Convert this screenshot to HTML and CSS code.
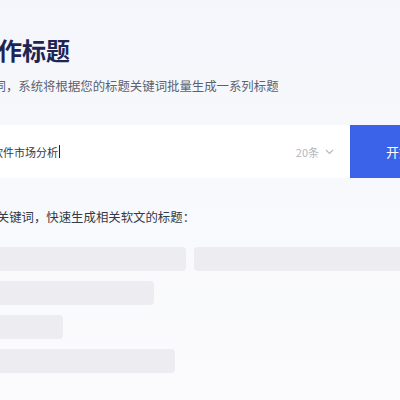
FILE: index.html
```html
<!DOCTYPE html>
<html lang="zh">
<head>
<meta charset="utf-8">
<link rel="stylesheet" href="styles.css">
</head>
<body>
<div class="page">
  <h1 class="title">创作标题</h1>
  <p class="subtitle">输入关键词，系统将根据您的标题关键词批量生成一系列标题</p>
  <div class="search">
    <div class="input">
      <span class="value">软件市场分析</span><span class="caret"></span>
      <span class="count">20条
        <svg class="chev" width="9" height="6" viewBox="0 0 9 6"><polyline points="1,1 4.5,4.5 8,1" fill="none" stroke="#b3b7c0" stroke-width="1.1"/></svg>
      </span>
    </div>
    <button class="btn">开始生成</button>
  </div>
  <p class="hint">输入关键词，快速生成相关软文的标题：</p>
  <div class="skeleton">
    <div class="row"><div class="bar" style="width:246px"></div><div class="bar" style="width:260px"></div></div>
    <div class="row"><div class="bar" style="width:214px"></div></div>
    <div class="row"><div class="bar" style="width:123px"></div></div>
    <div class="row"><div class="bar" style="width:235px"></div></div>
  </div>
</div>
</body>
</html>
```
FILE: styles.css
```css
html, body {
  margin: 0;
  padding: 0;
  width: 400px;
  height: 400px;
  overflow: hidden;
}
body {
  background: linear-gradient(180deg, #f4f6fb 0%, #f8f9fc 50%, #fbfbfd 100%);
  font-family: "Noto Sans CJK SC", "Noto Sans", sans-serif;
}
.page {
  margin-left: -60px;
  width: 540px;
  padding-top: 34px;
}
.title {
  margin: 0;
  padding-left: 34px;
  font-size: 24px;
  line-height: 32px;
  font-weight: 700;
  color: #1e2553;
}
.subtitle {
  margin: 10px 0 0;
  padding-left: 4px;
  font-size: 12.4px;
  line-height: 20px;
  color: #5c6270;
}
.search {
  margin-top: 29px;
  display: flex;
  height: 53px;
}
.input {
  width: 410px;
  background: #fff;
  display: flex;
  align-items: center;
  padding-left: 52px;
  box-sizing: border-box;
}
.value {
  font-size: 11px;
  color: #333a48;
}
.caret {
  display: inline-block;
  width: 1px;
  height: 13px;
  background: #222;
  margin-left: 1px;
}
.count {
  margin-left: auto;
  margin-right: 16px;
  font-size: 11px;
  color: #b3b7c0;
  display: flex;
  align-items: center;
  gap: 6px;
}
.btn {
  width: 130px;
  border: 0;
  background: #3a63ea;
  color: #fff;
  font-family: inherit;
  font-size: 13px;
  text-align: left;
  padding-left: 36px;
}
.hint {
  margin: 29px 0 0;
  padding-left: 32px;
  font-size: 12.4px;
  line-height: 20px;
  color: #333a48;
}
.skeleton {
  margin-top: 20px;
  display: flex;
  flex-direction: column;
  gap: 10px;
}
.row {
  display: flex;
  gap: 8px;
}
.bar {
  height: 24px;
  border-radius: 4px;
  background: #ededf1;
}
```
